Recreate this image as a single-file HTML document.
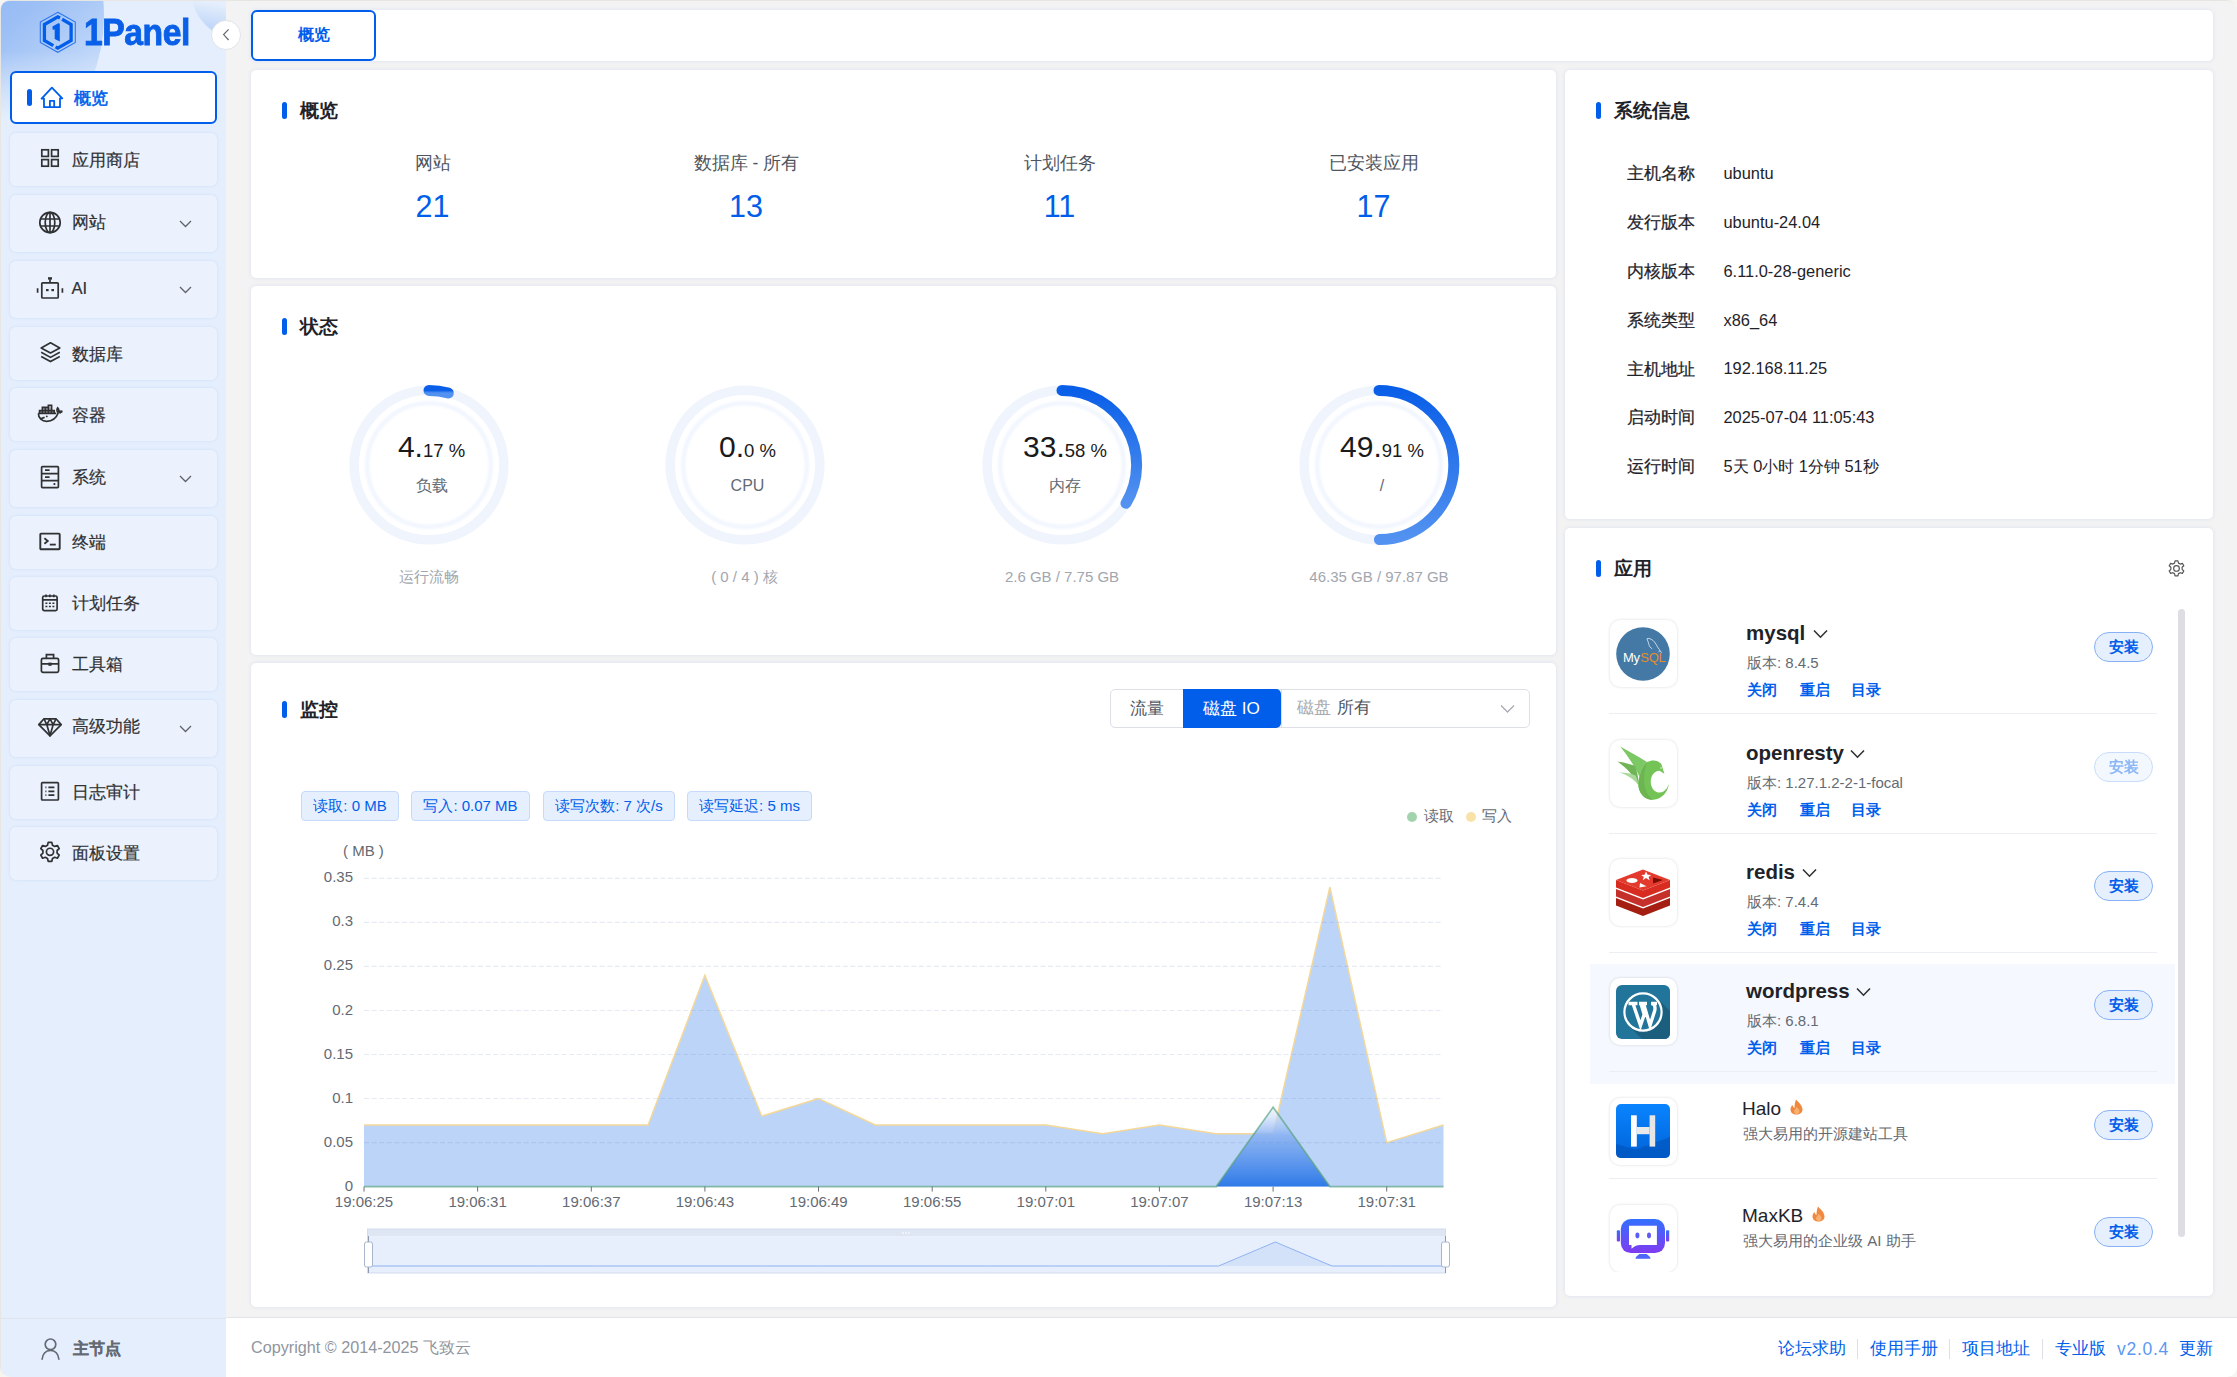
<!DOCTYPE html>
<html><head><meta charset="utf-8">
<style>
*{box-sizing:border-box;margin:0;padding:0}
html,body{width:2237px;height:1377px;overflow:hidden;background:#f6f5f2}
body{font-family:"Liberation Sans",sans-serif;color:#333;position:relative}
.a{position:absolute;white-space:nowrap}
#win{position:absolute;left:0;top:0;width:2237px;height:1377px;background:#f3f3f3;border-radius:10px;overflow:hidden;box-shadow:inset 1px 1px 0 #e8e6e2}
#side{position:absolute;left:1px;top:1px;width:225px;height:1376px;background:#e4eefc;border-top-left-radius:8px;border-bottom-left-radius:10px;overflow:hidden}
.mi{position:absolute;left:9px;width:207px;height:53px;border-radius:6px;background:#ebf2fd;box-shadow:0 0 3px rgba(40,110,230,0.12)}
.mi.sub{height:57px}
.mt{position:absolute;left:62px;font-size:16.6px;line-height:20px;color:#303133;white-space:nowrap;-webkit-text-stroke-width:0.2px}
.ic{position:absolute;overflow:visible}
.card{position:absolute;background:#fff;border-radius:5px;box-shadow:0 0 4px rgba(30,90,210,0.12)}
.ttl{position:absolute;font-size:19px;font-weight:bold;color:#1f2329;line-height:24px;white-space:nowrap}
.bar{position:absolute;width:5px;height:17px;border-radius:3px;background:#005eeb}
</style></head><body>
<div id="win">

<div id="side">
<div class="a" style="left:-239px;top:-156px;width:342px;height:342px;border-radius:50%;background:linear-gradient(140deg,#89b2f3 45%,#9cbff5 62%,#c4daf9 80%,#dde9fc 92%)"></div>
<div class="a" style="left:190px;top:-60px;width:98px;height:98px;border-radius:50%;background:linear-gradient(190deg,#e4eefc 66%,#abc8f7 100%)"></div>
<div class="a" style="left:0;top:50px;width:225px;height:150px;background:linear-gradient(rgba(228,238,252,0),#e4eefc 45%)"></div>
<svg class="ic" style="left:36px;top:8px" width="42" height="46" viewBox="36 8 42 46">
<path d="M56.8 11.3 L74.3 21 V41.4 L56.8 51.3 L39.3 41.4 V21 Z" fill="none" stroke="#1e6cec" stroke-width="1.05" opacity="0.9"/>
<path d="M59 17 L56.8 15.8 L43.4 23.5 V39.5 L52.3 44.6" fill="none" stroke="#005eeb" stroke-width="3.3"/>
<path d="M61.1 18.3 L70.1 23.5 V39.5 L56.8 47.2 L54.6 45.9" fill="none" stroke="#005eeb" stroke-width="3.3"/>
<path d="M51.4 25.6 L57.3 22.3 Q58.8 21.9 58.8 23.4 V40.6 L53.7 38.1 V28.2 L51.8 29 Z" fill="#005eeb"/>
</svg>
<div class="a" style="left:83px;top:12px;font-size:37px;line-height:40px;font-weight:bold;color:#0a5fe8;letter-spacing:-0.5px;transform:scaleX(0.91);transform-origin:0 0;-webkit-text-stroke:0.9px #0a5fe8">1Panel</div>
<div class="mi" style="top:70.0px;height:53px;background:#fff;border:2px solid #005eeb;box-shadow:none"></div>
<div class="a" style="left:26px;top:88px;width:5px;height:17px;border-radius:3px;background:#005eeb"></div>
<svg class="ic" style="left:33.2px;top:81.0px" width="34" height="30" viewBox="0 0 34 30"><path d="M10 25.2 V16.7 H7.6 L17.9 5.6 L28.3 16.3 H26 V25.2 Z" fill="none" stroke="#005eeb" stroke-width="1.8" stroke-linejoin="round"/><path d="M15.9 25.2 V18.8 H20.2 V25.2" fill="none" stroke="#005eeb" stroke-width="1.8" stroke-linejoin="round"/></svg>
<div class="mt" style="left:72.5px;top:87.6px;color:#005eeb;font-weight:normal;-webkit-text-stroke-width:0.55px">概览</div>
<div class="mi" style="top:132.0px"></div>
<svg class="ic" style="left:39.0px;top:147.0px" width="20" height="20" viewBox="0 0 20 20"><rect x="1.8" y="1.8" width="6.6" height="6.6" fill="none" stroke="#303133" stroke-width="1.7"/><rect x="11.6" y="1.8" width="6.6" height="6.6" fill="none" stroke="#303133" stroke-width="1.7"/><rect x="1.8" y="11.6" width="6.6" height="6.6" fill="none" stroke="#303133" stroke-width="1.7"/><rect x="11.6" y="11.6" width="6.6" height="6.6" fill="none" stroke="#303133" stroke-width="1.7"/></svg>
<div class="mt" style="left:70.5px;top:149.6px;color:#303133;font-weight:normal">应用商店</div>
<div class="mi sub" style="top:194.0px"></div>
<svg class="ic" style="left:37.0px;top:209.0px" width="24" height="24" viewBox="0 0 24 24"><circle cx="12" cy="12.5" r="10.2" fill="none" stroke="#303133" stroke-width="1.7"/><ellipse cx="12" cy="12.5" rx="4.8" ry="10.2" fill="none" stroke="#303133" stroke-width="1.7"/><path d="M12 2.3 V22.7 M2 9 H22 M2 16 H22" fill="none" stroke="#303133" stroke-width="1.7"/></svg>
<div class="mt" style="left:70.5px;top:211.6px;color:#303133;font-weight:normal">网站</div>
<svg class="ic" style="left:178px;top:219.0px" width="13" height="8" viewBox="0 0 13 8"><path d="M1 1 L6.5 6.5 L12 1" fill="none" stroke="#606266" stroke-width="1.3"/></svg>
<div class="mi sub" style="top:260.0px"></div>
<svg class="ic" style="left:35.0px;top:275.0px" width="28" height="24" viewBox="0 0 28 24"><rect x="5.8" y="6.8" width="16.4" height="15.2" rx="0.8" fill="none" stroke="#303133" stroke-width="1.7"/><path d="M14 6.8 V3.2" fill="none" stroke="#303133" stroke-width="1.7"/><rect x="12" y="1.2" width="4" height="2.4" fill="#303133"/><rect x="10" y="13" width="2.6" height="2.2" fill="#303133"/><rect x="15.4" y="13" width="2.6" height="2.2" fill="#303133"/><path d="M1.6 12.2 V16.8 M26.4 12.2 V16.8" fill="none" stroke="#303133" stroke-width="1.7"/></svg>
<div class="mt" style="left:70.5px;top:277.6px;color:#303133;font-weight:normal">AI</div>
<svg class="ic" style="left:178px;top:285.0px" width="13" height="8" viewBox="0 0 13 8"><path d="M1 1 L6.5 6.5 L12 1" fill="none" stroke="#606266" stroke-width="1.3"/></svg>
<div class="mi" style="top:326.0px"></div>
<svg class="ic" style="left:37.0px;top:339.0px" width="25" height="24" viewBox="0 0 25 24"><path d="M12.5 2.8 L21.8 7.9 L12.5 13 L3.2 7.9 Z" fill="none" stroke="#303133" stroke-width="1.7" stroke-linejoin="round"/><path d="M3.2 12.3 L12.5 17.4 L21.8 12.3" fill="none" stroke="#303133" stroke-width="1.7"/><path d="M3.2 16.5 L12.5 21.6 L21.8 16.5" fill="none" stroke="#303133" stroke-width="1.7"/></svg>
<div class="mt" style="left:70.5px;top:343.6px;color:#303133;font-weight:normal">数据库</div>
<div class="mi" style="top:387.0px"></div>
<svg class="ic" style="left:33.0px;top:399.0px" width="32" height="26" viewBox="0 0 32 26"><g transform="translate(-34,-400)"><path d="M38.3 413.4 H56.2 M38.4 413.4 C38.4 418.2 42 421.3 46.6 421.3 C51.8 421.3 56.2 418.4 58.3 412.8" fill="none" stroke="#303133" stroke-width="1.7" stroke-width="1.5"/><path d="M58.3 412.8 C56.9 411.8 56.5 409.6 57.6 407.9 C58.9 409.3 59.1 411.1 58.4 412.6 M58.6 411.7 L62.3 411.2 L59.4 413.3" fill="none" stroke="#303133" stroke-width="1.7" stroke-width="1.3"/><path d="M39.6 413.2 V410.6 H54.2 V413.2 M42.4 410.6 V413.2 M45.4 410.6 V413.2 M48.4 410.6 V413.2 M51.4 410.6 V413.2 M42.4 410.6 V407.3 H48.4 M45.4 407.3 V410.6 M48.4 410.6 V405.3 H51.6 V410.6" fill="none" stroke="#303133" stroke-width="1.7" stroke-width="1.2"/><rect x="39.6" y="410.6" width="14.6" height="2.8" fill="#303133" opacity="0.35"/><rect x="42.4" y="407.3" width="9.2" height="3.3" fill="#303133" opacity="0.35"/><circle cx="46.8" cy="416.4" r="0.9" fill="#303133"/><path d="M40.6 418.8 L44.6 417.4" fill="none" stroke="#303133" stroke-width="1.7" stroke-width="1.3"/></g></svg>
<div class="mt" style="left:70.5px;top:404.6px;color:#303133;font-weight:normal">容器</div>
<div class="mi sub" style="top:449.0px"></div>
<svg class="ic" style="left:38.0px;top:463.0px" width="22" height="26" viewBox="0 0 22 26"><rect x="2.6" y="2.6" width="16.8" height="21" rx="0.8" fill="none" stroke="#303133" stroke-width="1.7"/><path d="M2.6 9.6 H19.4 M2.6 16.6 H19.4 M6 6.1 H10.6 M6 13.1 H10.6" fill="none" stroke="#303133" stroke-width="1.7"/><circle cx="15.4" cy="20.1" r="1.1" fill="#303133"/></svg>
<div class="mt" style="left:70.5px;top:466.6px;color:#303133;font-weight:normal">系统</div>
<svg class="ic" style="left:178px;top:474.0px" width="13" height="8" viewBox="0 0 13 8"><path d="M1 1 L6.5 6.5 L12 1" fill="none" stroke="#606266" stroke-width="1.3"/></svg>
<div class="mi" style="top:514.5px"></div>
<svg class="ic" style="left:37.0px;top:530.0px" width="24" height="21" viewBox="0 0 24 21"><rect x="2.3" y="2.6" width="19.4" height="15.6" rx="0.8" fill="none" stroke="#303133" stroke-width="1.9"/><path d="M6.4 7.2 L9.8 10 L6.4 12.8" fill="none" stroke="#303133" stroke-width="1.8"/><path d="M11.8 13.6 H17.8" fill="none" stroke="#303133" stroke-width="1.8"/></svg>
<div class="mt" style="left:70.5px;top:532.1px;color:#303133;font-weight:normal">终端</div>
<div class="mi" style="top:575.5px"></div>
<svg class="ic" style="left:39.0px;top:591.0px" width="20" height="21" viewBox="0 0 20 21"><rect x="2.7" y="4" width="14.4" height="14.6" rx="1.5" fill="none" stroke="#303133" stroke-width="1.7"/><path d="M2.7 7.8 H17.1 M6 2.4 V5.2 M9.9 2.4 V5.2 M13.8 2.4 V5.2" fill="none" stroke="#303133" stroke-width="1.7"/><path d="M5.4 11.2 H7.4 M8.9 11.2 H10.9 M12.4 11.2 H14.4 M5.4 14.6 H7.4 M8.9 14.6 H10.9 M12.4 14.6 H14.4" fill="none" stroke="#303133" stroke-width="1.5"/></svg>
<div class="mt" style="left:70.5px;top:593.1px;color:#303133;font-weight:normal">计划任务</div>
<div class="mi" style="top:636.5px"></div>
<svg class="ic" style="left:38.0px;top:651.0px" width="22" height="22" viewBox="0 0 22 22"><rect x="2.4" y="6.4" width="17.2" height="14" rx="1.6" fill="none" stroke="#303133" stroke-width="1.7"/><path d="M7.4 6.4 V2.6 H14.6 V6.4 M2.4 11.8 H19.6" fill="none" stroke="#303133" stroke-width="1.7"/><rect x="9.4" y="10.6" width="3.2" height="3.2" fill="#303133"/></svg>
<div class="mt" style="left:70.5px;top:654.1px;color:#303133;font-weight:normal">工具箱</div>
<div class="mi sub" style="top:698.5px"></div>
<svg class="ic" style="left:36.0px;top:715.0px" width="26" height="22" viewBox="0 0 26 22"><path d="M7 2.8 H19 L24.2 8.6 L13 19.8 L1.8 8.6 Z" fill="none" stroke="#303133" stroke-width="1.7" stroke-linejoin="round"/><path d="M1.8 8.6 H24.2 M7 2.8 L9.8 8.6 L13 2.8 L16.2 8.6 L19 2.8 M9.8 8.6 L13 19.8 L16.2 8.6" fill="none" stroke="#303133" stroke-width="1.7" stroke-width="1.4" stroke-linejoin="round"/></svg>
<div class="mt" style="left:70.5px;top:716.1px;color:#303133;font-weight:normal">高级功能</div>
<svg class="ic" style="left:178px;top:723.5px" width="13" height="8" viewBox="0 0 13 8"><path d="M1 1 L6.5 6.5 L12 1" fill="none" stroke="#606266" stroke-width="1.3"/></svg>
<div class="mi" style="top:764.8px"></div>
<svg class="ic" style="left:38.0px;top:779.0px" width="22" height="22" viewBox="0 0 22 22"><rect x="2.6" y="2.6" width="16.8" height="17.4" rx="0.8" fill="none" stroke="#303133" stroke-width="1.7"/><path d="M9.4 7.4 H15.4 M9.4 11.3 H15.4 M9.4 15.2 H15.4" fill="none" stroke="#303133" stroke-width="1.7"/><path d="M6.4 7.4 H7.4 M6.4 11.3 H7.4 M6.4 15.2 H7.4" fill="none" stroke="#303133" stroke-width="1.8"/></svg>
<div class="mt" style="left:70.5px;top:782.4px;color:#303133;font-weight:normal">日志审计</div>
<div class="mi" style="top:825.8px"></div>
<svg class="ic" style="left:37.0px;top:839.0px" width="24" height="24" viewBox="0 0 24 24"><path d="M10.2 1.8 H13.8 L14.5 4.6 L16.7 5.8 L19.4 4.9 L21.2 8 L19.1 9.9 V12.5 L21.2 14.5 L19.4 17.6 L16.7 16.7 L14.5 17.9 L13.8 20.7 H10.2 L9.5 17.9 L7.3 16.7 L4.6 17.6 L2.8 14.5 L4.9 12.5 V9.9 L2.8 8 L4.6 4.9 L7.3 5.8 L9.5 4.6 Z" transform="translate(0,0.6)" fill="none" stroke="#303133" stroke-width="1.7" stroke-linejoin="round"/><circle cx="12" cy="11.85" r="3.6" fill="none" stroke="#303133" stroke-width="1.7"/></svg>
<div class="mt" style="left:70.5px;top:843.4px;color:#303133;font-weight:normal">面板设置</div>
<div class="a" style="left:0;top:1317px;width:225px;height:1px;background:#dfe3ea"></div>
<svg class="ic" style="left:38px;top:1336px" width="24" height="25" viewBox="0 0 24 25"><circle cx="11.5" cy="7.3" r="5.3" fill="none" stroke="#646a73" stroke-width="1.7"/><path d="M3 22.8 C3.5 16.8 7 13.4 11.5 13.4 C16 13.4 19.5 16.8 20 22.8" fill="none" stroke="#646a73" stroke-width="1.7"/></svg>
<div class="mt" style="left:72px;top:1337px;color:#646a73;font-weight:bold;font-size:16.2px">主节点</div>
</div>
<div class="a" style="left:211px;top:20px;width:30px;height:30px;border-radius:50%;background:#fff;border:1px solid #e2e4ea"></div>
<svg class="ic" style="left:221px;top:28px" width="12" height="14" viewBox="0 0 12 14"><path d="M7.6 1.3 L2.6 6.6 L7.6 12" fill="none" stroke="#60646c" stroke-width="1.15"/></svg>
<div class="card" style="left:251px;top:10px;width:1962px;height:51px"></div>
<div class="a" style="left:251px;top:10px;width:125px;height:51px;border:2px solid #005eeb;border-radius:6px;background:#fff"></div>
<div class="a" style="left:297.5px;top:24.5px;font-size:16px;line-height:20px;color:#005eeb;font-weight:bold">概览</div>
<div class="card" style="left:251px;top:70px;width:1305px;height:208px"></div>
<div class="bar" style="left:282px;top:102px"></div>
<div class="ttl" style="left:299.8px;top:98.7px">概览</div>
<div class="a" style="left:433.0px;top:151.8px;width:300px;margin-left:-150px;text-align:center;font-size:17.5px;line-height:22px;color:#4e5560">网站</div>
<div class="a" style="left:432.5px;top:189px;width:200px;margin-left:-100px;text-align:center;font-size:30.5px;line-height:34px;color:#005eeb">21</div>
<div class="a" style="left:746.5px;top:151.8px;width:300px;margin-left:-150px;text-align:center;font-size:17.5px;line-height:22px;color:#4e5560">数据库 - 所有</div>
<div class="a" style="left:746.0px;top:189px;width:200px;margin-left:-100px;text-align:center;font-size:30.5px;line-height:34px;color:#005eeb">13</div>
<div class="a" style="left:1060.0px;top:151.8px;width:300px;margin-left:-150px;text-align:center;font-size:17.5px;line-height:22px;color:#4e5560">计划任务</div>
<div class="a" style="left:1059.5px;top:189px;width:200px;margin-left:-100px;text-align:center;font-size:30.5px;line-height:34px;color:#005eeb">11</div>
<div class="a" style="left:1374.0px;top:151.8px;width:300px;margin-left:-150px;text-align:center;font-size:17.5px;line-height:22px;color:#4e5560">已安装应用</div>
<div class="a" style="left:1373.5px;top:189px;width:200px;margin-left:-100px;text-align:center;font-size:30.5px;line-height:34px;color:#005eeb">17</div>
<div class="card" style="left:251px;top:286px;width:1305px;height:369px"></div>
<div class="bar" style="left:282px;top:318px"></div>
<div class="ttl" style="left:299.8px;top:314.7px">状态</div>
<svg class="ic" style="left:338.5px;top:375px" width="180" height="180" viewBox="-90 -90 180 180"><defs><linearGradient id="g0" x1="0" y1="0" x2="0" y2="1"><stop offset="0" stop-color="#0a5fe8"/><stop offset="1" stop-color="#5392f0"/></linearGradient></defs><circle cx="0" cy="0" r="74.8" fill="none" stroke="#eff4fd" stroke-width="9.6"/><path d="M0 -74.6 A74.6 74.6 0 0 1 19.32 -72.05" fill="none" stroke="url(#g0)" stroke-width="11" stroke-linecap="round"/><filter id="bl0" x="-20%" y="-20%" width="140%" height="140%"><feGaussianBlur stdDeviation="1.3"/></filter><circle cx="0" cy="0" r="61.8" fill="none" stroke="#f2f6fe" stroke-width="4.5" filter="url(#bl0)"/></svg>
<div class="a" style="left:431.5px;top:430px;width:200px;margin-left:-100px;text-align:center;color:#1a1a1a;line-height:34px"><span style="font-size:30px">4.</span><span style="font-size:18.5px">17 %</span></div>
<div class="a" style="left:431.5px;top:475px;width:200px;margin-left:-100px;text-align:center;font-size:16px;line-height:22px;color:#646a73">负载</div>
<div class="a" style="left:428.5px;top:567px;width:300px;margin-left:-150px;text-align:center;font-size:15px;line-height:20px;color:#a2a6ae">运行流畅</div>
<svg class="ic" style="left:654.5px;top:375px" width="180" height="180" viewBox="-90 -90 180 180"><defs><linearGradient id="g1" x1="0" y1="0" x2="0" y2="1"><stop offset="0" stop-color="#0a5fe8"/><stop offset="1" stop-color="#5392f0"/></linearGradient></defs><circle cx="0" cy="0" r="74.8" fill="none" stroke="#eff4fd" stroke-width="9.6"/><filter id="bl1" x="-20%" y="-20%" width="140%" height="140%"><feGaussianBlur stdDeviation="1.3"/></filter><circle cx="0" cy="0" r="61.8" fill="none" stroke="#f2f6fe" stroke-width="4.5" filter="url(#bl1)"/></svg>
<div class="a" style="left:747.5px;top:430px;width:200px;margin-left:-100px;text-align:center;color:#1a1a1a;line-height:34px"><span style="font-size:30px">0.</span><span style="font-size:18.5px">0 %</span></div>
<div class="a" style="left:747.5px;top:475px;width:200px;margin-left:-100px;text-align:center;font-size:16px;line-height:22px;color:#646a73">CPU</div>
<div class="a" style="left:744.5px;top:567px;width:300px;margin-left:-150px;text-align:center;font-size:15px;line-height:20px;color:#a2a6ae">( 0 / 4 ) 核</div>
<svg class="ic" style="left:972.0px;top:375px" width="180" height="180" viewBox="-90 -90 180 180"><defs><linearGradient id="g2" x1="0" y1="0" x2="0" y2="1"><stop offset="0" stop-color="#0a5fe8"/><stop offset="1" stop-color="#5392f0"/></linearGradient></defs><circle cx="0" cy="0" r="74.8" fill="none" stroke="#eff4fd" stroke-width="9.6"/><path d="M0 -74.6 A74.6 74.6 0 0 1 64.02 38.30" fill="none" stroke="url(#g2)" stroke-width="11" stroke-linecap="round"/><filter id="bl2" x="-20%" y="-20%" width="140%" height="140%"><feGaussianBlur stdDeviation="1.3"/></filter><circle cx="0" cy="0" r="61.8" fill="none" stroke="#f2f6fe" stroke-width="4.5" filter="url(#bl2)"/></svg>
<div class="a" style="left:1065.0px;top:430px;width:200px;margin-left:-100px;text-align:center;color:#1a1a1a;line-height:34px"><span style="font-size:30px">33.</span><span style="font-size:18.5px">58 %</span></div>
<div class="a" style="left:1065.0px;top:475px;width:200px;margin-left:-100px;text-align:center;font-size:16px;line-height:22px;color:#646a73">内存</div>
<div class="a" style="left:1062.0px;top:567px;width:300px;margin-left:-150px;text-align:center;font-size:15px;line-height:20px;color:#a2a6ae">2.6 GB / 7.75 GB</div>
<svg class="ic" style="left:1289.0px;top:375px" width="180" height="180" viewBox="-90 -90 180 180"><defs><linearGradient id="g3" x1="0" y1="0" x2="0" y2="1"><stop offset="0" stop-color="#0a5fe8"/><stop offset="1" stop-color="#5392f0"/></linearGradient></defs><circle cx="0" cy="0" r="74.8" fill="none" stroke="#eff4fd" stroke-width="9.6"/><path d="M0 -74.6 A74.6 74.6 0 0 1 0.42 74.60" fill="none" stroke="url(#g3)" stroke-width="11" stroke-linecap="round"/><filter id="bl3" x="-20%" y="-20%" width="140%" height="140%"><feGaussianBlur stdDeviation="1.3"/></filter><circle cx="0" cy="0" r="61.8" fill="none" stroke="#f2f6fe" stroke-width="4.5" filter="url(#bl3)"/></svg>
<div class="a" style="left:1382.0px;top:430px;width:200px;margin-left:-100px;text-align:center;color:#1a1a1a;line-height:34px"><span style="font-size:30px">49.</span><span style="font-size:18.5px">91 %</span></div>
<div class="a" style="left:1382.0px;top:475px;width:200px;margin-left:-100px;text-align:center;font-size:16px;line-height:22px;color:#646a73">/</div>
<div class="a" style="left:1379.0px;top:567px;width:300px;margin-left:-150px;text-align:center;font-size:15px;line-height:20px;color:#a2a6ae">46.35 GB / 97.87 GB</div>
<div class="card" style="left:251px;top:663px;width:1305px;height:644px"></div>
<div class="bar" style="left:282px;top:701px"></div>
<div class="ttl" style="left:299.8px;top:697.7px">监控</div>
<div class="a" style="left:1110px;top:689px;width:420px;height:39px;border:1px solid #dcdfe6;border-radius:5px;background:#fff"></div>
<div class="a" style="left:1183px;top:689px;width:98px;height:39px;background:#005eeb;border-radius:0 5px 5px 0"></div>
<div class="a" style="left:1281px;top:689px;width:1px;height:39px;background:#dcdfe6"></div>
<div class="a" style="left:1130px;top:697px;font-size:16.5px;line-height:22px;color:#4e5560">流量</div>
<div class="a" style="left:1203px;top:697px;font-size:17.2px;line-height:22px;color:#fff">磁盘 IO</div>
<div class="a" style="left:1297px;top:697px;font-size:16.8px;line-height:22px;color:#a8abb2">磁盘 <span style="color:#4e5560;margin-left:1px">所有</span></div>
<svg class="ic" style="left:1500px;top:704px" width="15" height="10" viewBox="0 0 15 10"><path d="M1 1.5 L7.5 8 L14 1.5" fill="none" stroke="#a8abb2" stroke-width="1.3"/></svg>
<div class="a" style="left:301px;top:791px;width:98px;height:30px;border:1px solid #c6dafa;background:#e6effd;border-radius:4px;text-align:center;font-size:15px;line-height:28px;color:#005eeb">读取: 0 MB</div>
<div class="a" style="left:411px;top:791px;width:119px;height:30px;border:1px solid #c6dafa;background:#e6effd;border-radius:4px;text-align:center;font-size:15px;line-height:28px;color:#005eeb">写入: 0.07 MB</div>
<div class="a" style="left:543px;top:791px;width:132px;height:30px;border:1px solid #c6dafa;background:#e6effd;border-radius:4px;text-align:center;font-size:15px;line-height:28px;color:#005eeb">读写次数: 7 次/s</div>
<div class="a" style="left:687px;top:791px;width:125px;height:30px;border:1px solid #c6dafa;background:#e6effd;border-radius:4px;text-align:center;font-size:15px;line-height:28px;color:#005eeb">读写延迟: 5 ms</div>
<div class="a" style="left:1407px;top:812px;width:10px;height:10px;border-radius:50%;background:#a3d3ad"></div>
<div class="a" style="left:1423.5px;top:806px;font-size:15px;line-height:20px;color:#646a73">读取</div>
<div class="a" style="left:1466px;top:812px;width:10px;height:10px;border-radius:50%;background:#f8e2a8"></div>
<div class="a" style="left:1482px;top:806px;font-size:15px;line-height:20px;color:#646a73">写入</div>
<div class="a" style="left:343px;top:841px;font-size:15px;line-height:20px;color:#646a73">( MB )</div>
<div class="a" style="left:253px;top:1175.6px;width:100px;text-align:right;font-size:15px;line-height:20px;color:#646a73">0</div>
<div class="a" style="left:253px;top:1131.6px;width:100px;text-align:right;font-size:15px;line-height:20px;color:#646a73">0.05</div>
<div class="a" style="left:253px;top:1087.5px;width:100px;text-align:right;font-size:15px;line-height:20px;color:#646a73">0.1</div>
<div class="a" style="left:253px;top:1043.5px;width:100px;text-align:right;font-size:15px;line-height:20px;color:#646a73">0.15</div>
<div class="a" style="left:253px;top:999.5px;width:100px;text-align:right;font-size:15px;line-height:20px;color:#646a73">0.2</div>
<div class="a" style="left:253px;top:955.4px;width:100px;text-align:right;font-size:15px;line-height:20px;color:#646a73">0.25</div>
<div class="a" style="left:253px;top:911.4px;width:100px;text-align:right;font-size:15px;line-height:20px;color:#646a73">0.3</div>
<div class="a" style="left:253px;top:867.4px;width:100px;text-align:right;font-size:15px;line-height:20px;color:#646a73">0.35</div>
<svg class="ic" style="left:0;top:0" width="2237" height="1377"><defs><linearGradient id="rg" x1="0" y1="0" x2="0" y2="1"><stop offset="0" stop-color="#e8effc" stop-opacity="0.5"/><stop offset="0.35" stop-color="#8ab2f2" stop-opacity="0.9"/><stop offset="1" stop-color="#2f7ae8"/></linearGradient></defs><polygon points="364,1186.6 364.0,1125.0 420.8,1125.0 477.6,1125.0 534.4,1125.0 591.3,1125.0 648.1,1125.0 704.9,975.3 761.7,1116.2 818.5,1098.5 875.3,1125.0 932.2,1125.0 989.0,1125.0 1045.8,1125.0 1102.6,1133.8 1159.4,1125.0 1216.2,1133.8 1273.1,1133.8 1329.9,887.2 1386.7,1142.6 1443.5,1125.0 1443.5,1186.6" fill="#bcd4f7"/><polyline points="364.0,1125.0 420.8,1125.0 477.6,1125.0 534.4,1125.0 591.3,1125.0 648.1,1125.0 704.9,975.3 761.7,1116.2 818.5,1098.5 875.3,1125.0 932.2,1125.0 989.0,1125.0 1045.8,1125.0 1102.6,1133.8 1159.4,1125.0 1216.2,1133.8 1273.1,1133.8 1329.9,887.2 1386.7,1142.6 1443.5,1125.0" fill="none" stroke="#f3d89a" stroke-width="1.5"/><polygon points="364,1186.6 364.0,1186.6 420.8,1186.6 477.6,1186.6 534.4,1186.6 591.3,1186.6 648.1,1186.6 704.9,1186.6 761.7,1186.6 818.5,1186.6 875.3,1186.6 932.2,1186.6 989.0,1186.6 1045.8,1186.6 1102.6,1186.6 1159.4,1186.6 1216.2,1186.6 1273.1,1107.3 1329.9,1186.6 1386.7,1186.6 1443.5,1186.6 1443.5,1186.6" fill="url(#rg)"/><polyline points="364.0,1186.6 420.8,1186.6 477.6,1186.6 534.4,1186.6 591.3,1186.6 648.1,1186.6 704.9,1186.6 761.7,1186.6 818.5,1186.6 875.3,1186.6 932.2,1186.6 989.0,1186.6 1045.8,1186.6 1102.6,1186.6 1159.4,1186.6 1216.2,1186.6 1273.1,1107.3 1329.9,1186.6 1386.7,1186.6 1443.5,1186.6" fill="none" stroke="#5aa283" stroke-width="1.7" stroke-opacity="0.7"/><line x1="364" y1="1142.6" x2="1443" y2="1142.6" stroke="#6e8cc0" stroke-opacity="0.18" stroke-width="1.2" stroke-dasharray="5 2.6"/><line x1="364" y1="1098.5" x2="1443" y2="1098.5" stroke="#6e8cc0" stroke-opacity="0.18" stroke-width="1.2" stroke-dasharray="5 2.6"/><line x1="364" y1="1054.5" x2="1443" y2="1054.5" stroke="#6e8cc0" stroke-opacity="0.18" stroke-width="1.2" stroke-dasharray="5 2.6"/><line x1="364" y1="1010.5" x2="1443" y2="1010.5" stroke="#6e8cc0" stroke-opacity="0.18" stroke-width="1.2" stroke-dasharray="5 2.6"/><line x1="364" y1="966.4" x2="1443" y2="966.4" stroke="#6e8cc0" stroke-opacity="0.18" stroke-width="1.2" stroke-dasharray="5 2.6"/><line x1="364" y1="922.4" x2="1443" y2="922.4" stroke="#6e8cc0" stroke-opacity="0.18" stroke-width="1.2" stroke-dasharray="5 2.6"/><line x1="364" y1="878.4" x2="1443" y2="878.4" stroke="#6e8cc0" stroke-opacity="0.18" stroke-width="1.2" stroke-dasharray="5 2.6"/><line x1="364.0" y1="1186.6" x2="364.0" y2="1191.6" stroke="#6e7079" stroke-width="1"/><line x1="477.6" y1="1186.6" x2="477.6" y2="1191.6" stroke="#6e7079" stroke-width="1"/><line x1="591.3" y1="1186.6" x2="591.3" y2="1191.6" stroke="#6e7079" stroke-width="1"/><line x1="704.9" y1="1186.6" x2="704.9" y2="1191.6" stroke="#6e7079" stroke-width="1"/><line x1="818.5" y1="1186.6" x2="818.5" y2="1191.6" stroke="#6e7079" stroke-width="1"/><line x1="932.2" y1="1186.6" x2="932.2" y2="1191.6" stroke="#6e7079" stroke-width="1"/><line x1="1045.8" y1="1186.6" x2="1045.8" y2="1191.6" stroke="#6e7079" stroke-width="1"/><line x1="1159.4" y1="1186.6" x2="1159.4" y2="1191.6" stroke="#6e7079" stroke-width="1"/><line x1="1273.1" y1="1186.6" x2="1273.1" y2="1191.6" stroke="#6e7079" stroke-width="1"/><line x1="1386.7" y1="1186.6" x2="1386.7" y2="1191.6" stroke="#6e7079" stroke-width="1"/><rect x="367.5" y="1229" width="1078" height="7.5" fill="#dee5f3"/><rect x="367.5" y="1236.5" width="1078" height="36.5" fill="#e7eefc"/><polygon points="367.5,1266 367.5,1266.0 424.2,1266.0 481.0,1266.0 537.7,1266.0 594.4,1266.0 651.2,1266.0 707.9,1266.0 764.7,1266.0 821.4,1266.0 878.1,1266.0 934.9,1266.0 991.6,1266.0 1048.3,1266.0 1105.1,1266.0 1161.8,1266.0 1218.6,1266.0 1275.3,1242.0 1332.0,1266.0 1388.8,1266.0 1445.5,1266.0 1445.5,1266" fill="#d3e1f9"/><polyline points="367.5,1266.0 424.2,1266.0 481.0,1266.0 537.7,1266.0 594.4,1266.0 651.2,1266.0 707.9,1266.0 764.7,1266.0 821.4,1266.0 878.1,1266.0 934.9,1266.0 991.6,1266.0 1048.3,1266.0 1105.1,1266.0 1161.8,1266.0 1218.6,1266.0 1275.3,1242.0 1332.0,1266.0 1388.8,1266.0 1445.5,1266.0" fill="none" stroke="#8fb3f2" stroke-width="1"/><rect x="367.5" y="1229" width="1078" height="44" fill="none" stroke="#d3dcec" stroke-width="1"/><path d="M368.5 1236 V1273 M1445.5 1236 V1273" stroke="#8d99ae" stroke-width="1"/><rect x="364.5" y="1242" width="8" height="25" rx="2" fill="#fff" stroke="#a9b6cc" stroke-width="1"/><rect x="1441.5" y="1242" width="8" height="25" rx="2" fill="#fff" stroke="#a9b6cc" stroke-width="1"/><path d="M903 1232 V1234 M906 1232 V1234 M909 1232 V1234" stroke="#fff" stroke-width="1"/></svg>
<div class="a" style="left:364.0px;top:1192px;width:100px;margin-left:-50px;text-align:center;font-size:15px;line-height:20px;color:#646a73">19:06:25</div>
<div class="a" style="left:477.6px;top:1192px;width:100px;margin-left:-50px;text-align:center;font-size:15px;line-height:20px;color:#646a73">19:06:31</div>
<div class="a" style="left:591.3px;top:1192px;width:100px;margin-left:-50px;text-align:center;font-size:15px;line-height:20px;color:#646a73">19:06:37</div>
<div class="a" style="left:704.9px;top:1192px;width:100px;margin-left:-50px;text-align:center;font-size:15px;line-height:20px;color:#646a73">19:06:43</div>
<div class="a" style="left:818.5px;top:1192px;width:100px;margin-left:-50px;text-align:center;font-size:15px;line-height:20px;color:#646a73">19:06:49</div>
<div class="a" style="left:932.2px;top:1192px;width:100px;margin-left:-50px;text-align:center;font-size:15px;line-height:20px;color:#646a73">19:06:55</div>
<div class="a" style="left:1045.8px;top:1192px;width:100px;margin-left:-50px;text-align:center;font-size:15px;line-height:20px;color:#646a73">19:07:01</div>
<div class="a" style="left:1159.4px;top:1192px;width:100px;margin-left:-50px;text-align:center;font-size:15px;line-height:20px;color:#646a73">19:07:07</div>
<div class="a" style="left:1273.1px;top:1192px;width:100px;margin-left:-50px;text-align:center;font-size:15px;line-height:20px;color:#646a73">19:07:13</div>
<div class="a" style="left:1386.7px;top:1192px;width:100px;margin-left:-50px;text-align:center;font-size:15px;line-height:20px;color:#646a73">19:07:31</div>
<div class="card" style="left:1565px;top:70px;width:648px;height:449px"></div>
<div class="bar" style="left:1596px;top:102px"></div>
<div class="ttl" style="left:1613.8px;top:98.7px">系统信息</div>
<div class="a" style="left:1627px;top:163.4px;font-size:16.6px;line-height:22px;color:#1f2329;-webkit-text-stroke:0.25px #1f2329">主机名称</div>
<div class="a" style="left:1723.5px;top:162.2px;font-size:16.4px;line-height:22px;color:#1f2329">ubuntu</div>
<div class="a" style="left:1627px;top:212.2px;font-size:16.6px;line-height:22px;color:#1f2329;-webkit-text-stroke:0.25px #1f2329">发行版本</div>
<div class="a" style="left:1723.5px;top:211.0px;font-size:16.4px;line-height:22px;color:#1f2329">ubuntu-24.04</div>
<div class="a" style="left:1627px;top:260.9px;font-size:16.6px;line-height:22px;color:#1f2329;-webkit-text-stroke:0.25px #1f2329">内核版本</div>
<div class="a" style="left:1723.5px;top:259.7px;font-size:16.4px;line-height:22px;color:#1f2329">6.11.0-28-generic</div>
<div class="a" style="left:1627px;top:309.7px;font-size:16.6px;line-height:22px;color:#1f2329;-webkit-text-stroke:0.25px #1f2329">系统类型</div>
<div class="a" style="left:1723.5px;top:308.5px;font-size:16.4px;line-height:22px;color:#1f2329">x86_64</div>
<div class="a" style="left:1627px;top:358.5px;font-size:16.6px;line-height:22px;color:#1f2329;-webkit-text-stroke:0.25px #1f2329">主机地址</div>
<div class="a" style="left:1723.5px;top:357.3px;font-size:16.4px;line-height:22px;color:#1f2329">192.168.11.25</div>
<div class="a" style="left:1627px;top:407.2px;font-size:16.6px;line-height:22px;color:#1f2329;-webkit-text-stroke:0.25px #1f2329">启动时间</div>
<div class="a" style="left:1723.5px;top:406.1px;font-size:16.4px;line-height:22px;color:#1f2329">2025-07-04 11:05:43</div>
<div class="a" style="left:1627px;top:456.0px;font-size:16.6px;line-height:22px;color:#1f2329;-webkit-text-stroke:0.25px #1f2329">运行时间</div>
<div class="a" style="left:1723.5px;top:454.8px;font-size:16.4px;line-height:22px;color:#1f2329">5天 0小时 1分钟 51秒</div>
<div class="card" style="left:1565px;top:528px;width:648px;height:768px"></div>
<div class="bar" style="left:1596px;top:560px"></div>
<div class="ttl" style="left:1613.8px;top:556.7px">应用</div>
<svg class="ic" style="left:2166.5px;top:558.5px" width="19" height="19" viewBox="0 0 24 24"><path d="M10.2 1.8 H13.8 L14.5 4.6 L16.7 5.8 L19.4 4.9 L21.2 8 L19.1 9.9 V12.5 L21.2 14.5 L19.4 17.6 L16.7 16.7 L14.5 17.9 L13.8 20.7 H10.2 L9.5 17.9 L7.3 16.7 L4.6 17.6 L2.8 14.5 L4.9 12.5 V9.9 L2.8 8 L4.6 4.9 L7.3 5.8 L9.5 4.6 Z" transform="translate(0,0.6)" fill="none" stroke="#555" stroke-width="1.5" stroke-linejoin="round"/><circle cx="12" cy="11.85" r="3.6" fill="none" stroke="#555" stroke-width="1.5"/></svg>
<div class="a" style="left:1590px;top:605px;width:590px;height:667px;overflow:hidden">
<div class="a" style="left:0px;top:359px;width:585px;height:120px;background:#f5f8fe"></div>
<div class="a" style="left:20px;top:15px;width:67px;height:67px;border-radius:10px;background:#fff;box-shadow:0 0 3px rgba(0,0,0,0.15)"></div>
<svg class="ic" style="left:26px;top:22px" width="54" height="54" viewBox="0 0 54 54"><circle cx="27" cy="27" r="26.8" fill="#4479a5"/><text x="7" y="34.8" font-family="Liberation Sans" font-size="13" fill="#fff" letter-spacing="-0.3">My</text><text x="24.3" y="34.8" font-family="Liberation Sans" font-size="13" fill="#e48e27" letter-spacing="-0.3">SQL</text><path d="M43.5 34.6 H46.6" stroke="#e48e27" stroke-width="0.6"/><path d="M30.8 11.6 C33.5 10.8 36.5 12.5 38.5 15 C40.5 17.5 41.5 20.5 43.2 22.3 L45.6 25.8 M43.6 23.5 L42.8 25.2 M31 12 C31.8 14 32.6 15.8 33 17.8 C33.3 19.3 34.5 20.8 36.2 21.8" fill="none" stroke="#fff" stroke-width="0.8" opacity="0.85"/></svg>
<div class="a" style="left:156px;top:16px;font-size:20.5px;line-height:24px;font-weight:bold;color:#1f2329">mysql</div>
<div class="a" style="left:157px;top:48px;font-size:15px;line-height:20px;color:#646a73">版本: 8.4.5</div>
<div class="a" style="left:157px;top:75px;font-size:14.6px;line-height:20px;color:#005eeb;font-weight:bold;word-spacing:0">关闭<span style="margin-left:22.5px">重启</span><span style="margin-left:21.5px">目录</span></div>
<div class="a" style="left:19px;top:108px;width:548px;height:1px;background:#ebeef5"></div>
<div class="a" style="left:504px;top:27px;width:59px;height:30px;border-radius:15px;border:1px solid #86b1f5;background:#e6effd;opacity:1;text-align:center;font-size:15px;line-height:28px;font-weight:bold;color:#005eeb">安装</div>
<div class="a" style="left:20px;top:135px;width:67px;height:67px;border-radius:10px;background:#fff;box-shadow:0 0 3px rgba(0,0,0,0.15)"></div>
<svg class="ic" style="left:26px;top:142px" width="54" height="54" viewBox="0 0 54 54"><path d="M4.2 -0.6 C12 4 22 9 31 15 C27 19 24.5 24 23.5 30 C19 19 11 8 4.2 -0.6 Z" fill="#7cc865"/><path d="M1.2 14.6 C8 15.5 14 17 19 18.7 C21 24 22.5 30 22.8 38 C17 28 9 19 1.2 14.6 Z" fill="#6fb456"/><path d="M3.2 25.6 C9 25.5 15 26.5 19.5 28.5 C21 31.5 22 35 22.3 38 C17 31.5 10 27.5 3.2 25.6 Z" fill="#a9d99a"/><path d="M31 15 C36 12.8 42 12.5 45.5 17.5 L48.4 26.8 L43.5 23.8 C37 24 33.8 31 35 37.5 C36.5 44 42 47.5 47.5 44.5 C50 43 52 40 52.8 36.8 C52.5 44 46 52.8 37 52.8 C28 53 23 45.5 22.5 39 C22 32 25 21 31 15 Z" fill="#74c357"/><path d="M23.5 30 C24.5 24 27 19 31 15 C28.5 22 27.5 30 28.5 38 C29.5 45 33 50 37 52.8 C28 53 23 45.5 22.5 39 C22.3 36 22.7 33 23.5 30 Z" fill="#6cb551"/><circle cx="45" cy="21" r="0.8" fill="#e8f5e0"/></svg>
<div class="a" style="left:156px;top:136px;font-size:20.5px;line-height:24px;font-weight:bold;color:#1f2329">openresty</div>
<div class="a" style="left:157px;top:168px;font-size:15px;line-height:20px;color:#646a73">版本: 1.27.1.2-2-1-focal</div>
<div class="a" style="left:157px;top:195px;font-size:14.6px;line-height:20px;color:#005eeb;font-weight:bold;word-spacing:0">关闭<span style="margin-left:22.5px">重启</span><span style="margin-left:21.5px">目录</span></div>
<div class="a" style="left:19px;top:228px;width:548px;height:1px;background:#ebeef5"></div>
<div class="a" style="left:504px;top:147px;width:59px;height:30px;border-radius:15px;border:1px solid #86b1f5;background:#e6effd;opacity:0.45;text-align:center;font-size:15px;line-height:28px;font-weight:bold;color:#005eeb">安装</div>
<div class="a" style="left:20px;top:254px;width:67px;height:67px;border-radius:10px;background:#fff;box-shadow:0 0 3px rgba(0,0,0,0.15)"></div>
<svg class="ic" style="left:26px;top:261px" width="54" height="54" viewBox="0 0 54 54"><path d="M0 32 L27 42.5 L54 32 V39.5 L27 50 L0 39.5 Z" fill="#a41e11"/><path d="M0 23 L27 33.5 L54 23 V30.5 L27 41 L0 30.5 Z" fill="#c6302b"/><path d="M0 14 L27 24.5 L54 14 V21.5 L27 32 L0 21.5 Z" fill="#d82c20"/><path d="M0 14 L27 3.5 L54 14 L27 24.5 Z" fill="#e33a2d"/><ellipse cx="16" cy="14.5" rx="5.5" ry="2.6" fill="#fff"/><path d="M30 5.5 L31.6 8.8 L35.2 9.1 L32.6 10.9 L33.6 14.2 L30 12.1 L26.8 14.2 L27.8 10.9 L25.2 9.1 L28.6 8.8 Z" fill="#fff"/><path d="M24 17 L30.5 20.3 L23.5 21.5 Z" fill="#fff"/><path d="M37 11.5 L47 14 L37 17.5 Z" fill="#7a0c00"/></svg>
<div class="a" style="left:156px;top:255px;font-size:20.5px;line-height:24px;font-weight:bold;color:#1f2329">redis</div>
<div class="a" style="left:157px;top:287px;font-size:15px;line-height:20px;color:#646a73">版本: 7.4.4</div>
<div class="a" style="left:157px;top:314px;font-size:14.6px;line-height:20px;color:#005eeb;font-weight:bold;word-spacing:0">关闭<span style="margin-left:22.5px">重启</span><span style="margin-left:21.5px">目录</span></div>
<div class="a" style="left:19px;top:347px;width:548px;height:1px;background:#ebeef5"></div>
<div class="a" style="left:504px;top:266px;width:59px;height:30px;border-radius:15px;border:1px solid #86b1f5;background:#e6effd;opacity:1;text-align:center;font-size:15px;line-height:28px;font-weight:bold;color:#005eeb">安装</div>
<div class="a" style="left:20px;top:373px;width:67px;height:67px;border-radius:10px;background:#fff;box-shadow:0 0 3px rgba(0,0,0,0.15)"></div>
<svg class="ic" style="left:26px;top:380px" width="54" height="54" viewBox="0 0 54 54"><rect x="0" y="0" width="54" height="54" rx="6" fill="#21759b"/><path d="M41 13 L54 26 V48 Q54 54 48 54 H26 L13 41 Z" fill="#1b5e7d"/><circle cx="27" cy="27" r="19" fill="#21759b"/><circle cx="27" cy="27" r="18.6" fill="none" stroke="#fff" stroke-width="2.2"/><path d="M12.5 18.5 H21.5 M17 18.5 L24.5 40.5 L28.2 29.5 L25 18.5 M23 18.5 H31 M27.5 18.5 L34 40.5 L38.6 26 C39.6 22.5 38.5 19.5 36.5 18.5 M35 18.5 H41" fill="none" stroke="#fff" stroke-width="3.4"/></svg>
<div class="a" style="left:156px;top:374px;font-size:20.5px;line-height:24px;font-weight:bold;color:#1f2329">wordpress</div>
<div class="a" style="left:157px;top:406px;font-size:15px;line-height:20px;color:#646a73">版本: 6.8.1</div>
<div class="a" style="left:157px;top:433px;font-size:14.6px;line-height:20px;color:#005eeb;font-weight:bold;word-spacing:0">关闭<span style="margin-left:22.5px">重启</span><span style="margin-left:21.5px">目录</span></div>
<div class="a" style="left:19px;top:466px;width:548px;height:1px;background:#ebeef5"></div>
<div class="a" style="left:504px;top:385px;width:59px;height:30px;border-radius:15px;border:1px solid #86b1f5;background:#e6effd;opacity:1;text-align:center;font-size:15px;line-height:28px;font-weight:bold;color:#005eeb">安装</div>
<div class="a" style="left:20px;top:493px;width:67px;height:67px;border-radius:10px;background:#fff;box-shadow:0 0 3px rgba(0,0,0,0.15)"></div>
<svg class="ic" style="left:26px;top:499px" width="54" height="54" viewBox="0 0 54 54"><defs><linearGradient id="hal" x1="0" y1="0" x2="0" y2="1"><stop offset="0" stop-color="#0a84ff"/><stop offset="1" stop-color="#0063d8"/></linearGradient></defs><rect x="0" y="0" width="54" height="54" rx="5" fill="url(#hal)"/><path d="M0 40 L20 45.5 L54 33 V49 Q54 54 49 54 H5 Q0 54 0 49 Z" fill="#0052b8" opacity="0.6"/><rect x="15" y="11.3" width="5.8" height="31.3" fill="#fff"/><rect x="33.6" y="11.3" width="5.6" height="31.3" fill="#e6e6e6"/><rect x="20.8" y="23" width="12.8" height="7.2" fill="#e9e9e9"/></svg>
<div class="a" style="left:152px;top:492px;font-size:19px;line-height:24px;color:#1f2329">Halo</div>
<div class="a" style="left:153px;top:519px;font-size:15px;line-height:20px;color:#646a73">强大易用的开源建站工具</div>
<div class="a" style="left:19px;top:573px;width:548px;height:1px;background:#ebeef5"></div>
<div class="a" style="left:504px;top:505px;width:59px;height:30px;border-radius:15px;border:1px solid #86b1f5;background:#e6effd;opacity:1;text-align:center;font-size:15px;line-height:28px;font-weight:bold;color:#005eeb">安装</div>
<div class="a" style="left:20px;top:600px;width:67px;height:67px;border-radius:10px;background:#fff;box-shadow:0 0 3px rgba(0,0,0,0.15)"></div>
<svg class="ic" style="left:26px;top:607px" width="54" height="54" viewBox="0 0 54 54"><defs><linearGradient id="mkb" x1="0" y1="0" x2="0" y2="1"><stop offset="0" stop-color="#3370ff"/><stop offset="1" stop-color="#7f3bf0"/></linearGradient></defs><rect x="0.8" y="18.3" width="3.2" height="11.2" rx="1" fill="url(#mkb)"/><rect x="50" y="18.3" width="3.2" height="11.2" rx="1" fill="url(#mkb)"/><rect x="4.8" y="7.1" width="44.2" height="34" rx="10" fill="url(#mkb)"/><path d="M13 13.7 H40.9 V33 H24 Q19 33 15.5 36.8 L15.5 33 H13 Z" fill="#fff"/><ellipse cx="21.4" cy="23.4" rx="2" ry="2.8" fill="#5a5ef8"/><ellipse cx="33" cy="23.4" rx="2" ry="2.8" fill="#5f5bf7"/><path d="M19.5 46.8 Q19.5 45 21 44 L23.5 42 H30.5 L33 44 Q34.5 45 34.5 46.8 Z" fill="#4d66fb"/></svg>
<div class="a" style="left:152px;top:599px;font-size:19px;line-height:24px;color:#1f2329">MaxKB</div>
<div class="a" style="left:153px;top:626px;font-size:15px;line-height:20px;color:#646a73">强大易用的企业级 AI 助手</div>
<div class="a" style="left:504px;top:612px;width:59px;height:30px;border-radius:15px;border:1px solid #86b1f5;background:#e6effd;opacity:1;text-align:center;font-size:15px;line-height:28px;font-weight:bold;color:#005eeb">安装</div>
</div>
<svg class="ic" style="left:1813px;top:629px" width="15" height="10" viewBox="0 0 15 10"><path d="M1 1.5 L7.5 8.2 L14 1.5" fill="none" stroke="#303133" stroke-width="1.6"/></svg>
<svg class="ic" style="left:1850px;top:749px" width="15" height="10" viewBox="0 0 15 10"><path d="M1 1.5 L7.5 8.2 L14 1.5" fill="none" stroke="#303133" stroke-width="1.6"/></svg>
<svg class="ic" style="left:1802px;top:868px" width="15" height="10" viewBox="0 0 15 10"><path d="M1 1.5 L7.5 8.2 L14 1.5" fill="none" stroke="#303133" stroke-width="1.6"/></svg>
<svg class="ic" style="left:1856px;top:987px" width="15" height="10" viewBox="0 0 15 10"><path d="M1 1.5 L7.5 8.2 L14 1.5" fill="none" stroke="#303133" stroke-width="1.6"/></svg>
<svg class="ic" style="left:1789px;top:1099px" width="15" height="16" viewBox="0 0 15 16"><path d="M7 0.5 C9 3 13.5 6 13.5 10.5 C13.5 13.8 10.8 15.5 7.5 15.5 C4 15.5 1.5 13.5 1.5 10.5 C1.5 8.5 2.5 7 3.5 6 C3.8 7.5 4.5 8.5 5.5 9 C5.5 6 6 3 7 0.5 Z" fill="#f0883e"/><path d="M7.8 8 C9 9.5 10.5 10.5 10.5 12.5 C10.5 14 9.2 15 7.7 15 C6.2 15 5 14 5 12.5 C5 11 6.5 10 7.8 8 Z" fill="#f7b072"/></svg>
<svg class="ic" style="left:1811px;top:1206px" width="15" height="16" viewBox="0 0 15 16"><path d="M7 0.5 C9 3 13.5 6 13.5 10.5 C13.5 13.8 10.8 15.5 7.5 15.5 C4 15.5 1.5 13.5 1.5 10.5 C1.5 8.5 2.5 7 3.5 6 C3.8 7.5 4.5 8.5 5.5 9 C5.5 6 6 3 7 0.5 Z" fill="#f0883e"/><path d="M7.8 8 C9 9.5 10.5 10.5 10.5 12.5 C10.5 14 9.2 15 7.7 15 C6.2 15 5 14 5 12.5 C5 11 6.5 10 7.8 8 Z" fill="#f7b072"/></svg>
<div class="a" style="left:2178px;top:609px;width:7px;height:628px;border-radius:4px;background:#dcdee3"></div>
<div class="a" style="left:226px;top:1317px;width:2011px;height:60px;background:#fff;border-top:1px solid #e1e4ea"></div>
<div class="a" style="left:251px;top:1337px;font-size:16.2px;line-height:20px;color:#8f959e">Copyright © 2014-2025 飞致云</div>
<div class="a" style="left:1778px;top:1338px;font-size:16.9px;line-height:22px;color:#005eeb">论坛求助</div>
<div class="a" style="left:1857px;top:1339px;width:1px;height:20px;background:#dcdfe6"></div>
<div class="a" style="left:1870px;top:1338px;font-size:16.9px;line-height:22px;color:#005eeb">使用手册</div>
<div class="a" style="left:1949px;top:1339px;width:1px;height:20px;background:#dcdfe6"></div>
<div class="a" style="left:1962px;top:1338px;font-size:16.9px;line-height:22px;color:#005eeb">项目地址</div>
<div class="a" style="left:2042px;top:1339px;width:1px;height:20px;background:#dcdfe6"></div>
<div class="a" style="left:2055px;top:1338px;font-size:16.9px;line-height:22px;color:#005eeb">专业版</div>
<div class="a" style="left:2117px;top:1338px;font-size:17.5px;line-height:22px;color:#5b98f2;letter-spacing:0.7px">v2.0.4</div>
<div class="a" style="left:2179px;top:1338px;font-size:16.9px;line-height:22px;color:#005eeb">更新</div>
</div></body></html>
